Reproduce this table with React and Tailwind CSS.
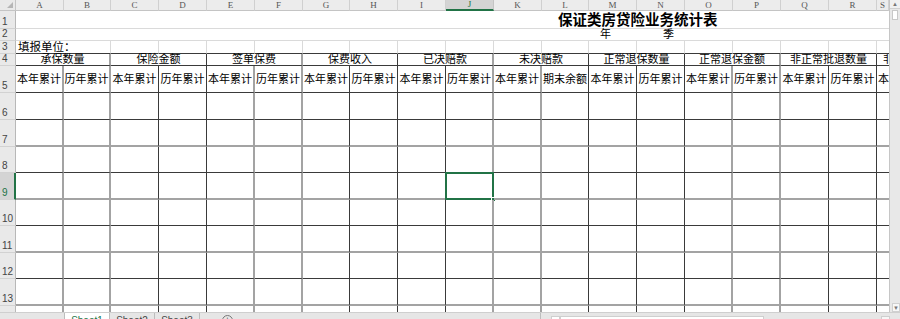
import React from "react";

const COLS = "ABCDEFGHIJKLMNOPQRS".split("");
// right-edge line of each column A..R as it shows in the shot: k = dark, g = soft grey
const VLINE = ["g", "g", "k", "k", "g", "g", "k", "k", "k", "g", "g", "k", "k", "k", "g", "g", "k", "k"];
const HLINE = { 4: "k", 5: "k", 6: "k", 7: "g", 8: "k", 9: "g", 10: "k", 11: "g", 12: "k", 13: "g" };
const RB = { k: "border-r border-r-[#3a3a3a]", g: "border-r-2 border-r-[#a3a3a3]" };
const BB = { k: "border-b border-b-[#3a3a3a]", g: "border-b-2 border-b-[#a3a3a3]" };

const GROUPS = [
  "承保数量",
  "保险金额",
  "签单保费",
  "保费收入",
  "已决赔款",
  "未决赔款",
  "正常退保数量",
  "正常退保金额",
  "非正常批退数量",
];

const SUB = Array.from({ length: 19 }, (_, i) => (i === 11 ? "期末余额" : i % 2 === 0 ? "本年累计" : "历年累计"));

function RowHead({ n, active }) {
  return (
    <div
      className={`flex items-end pl-[2px] pb-[1px] text-[10px] leading-none border-b border-b-[#d2d2d2] ${
        active
          ? "bg-[#d4d4d4] text-[#217346] border-r-2 border-r-[#217346]"
          : "bg-[#e9e9e9] text-[#444] border-r border-r-[#b8b8b8]"
      }`}
    >
      {n}
    </div>
  );
}

export default function App() {
  const dataRows = [6, 7, 8, 9, 10, 11, 12, 13, 14];

  return (
    <div className="w-[900px] h-[319px] overflow-hidden bg-white font-['Liberation_Sans','Noto_Sans_CJK_SC',sans-serif] text-black">
      <div className="flex h-[312px] overflow-hidden">
        <div className="grid w-[889px] grid-cols-[16px_48px_47px_48px_48px_48px_48px_47px_48px_48px_48px_48px_47px_48px_48px_48px_48px_48px_48px_12px] grid-rows-[11px_18px_12px_13px_12px_27px_27px_27px_26px_27px_26px_27px_26px_27px_27px]">
          {/* column headers */}
          <div className="relative bg-[#e9e9e9] border-r border-b border-[#c4c4c4]">
            <svg className="absolute right-[2px] bottom-[2px]" width="6" height="6" viewBox="0 0 6 6">
              <polygon points="6,0 6,6 0,6" fill="#b5b5b5" />
            </svg>
          </div>
          {COLS.map((c) => (
            <div
              key={c}
              className={`flex items-center justify-center overflow-hidden font-['Liberation_Serif',serif] text-[9px] leading-none ${
                c === "J"
                  ? "bg-[#d4d4d4] text-[#217346] border-r border-r-[#c4c4c4] border-b-2 border-b-[#217346]"
                  : "bg-[#ececec] text-[#555] border-r border-r-[#d0d0d0] border-b border-b-[#c4c4c4]"
              }`}
            >
              {c}
            </div>
          ))}

          {/* row 1 - title */}
          <RowHead n={1} />
          <div className="col-span-19 flex items-end pl-[542px] border-b border-b-[#dadada]">
            <span className="text-[14.5px] font-bold leading-[15px] whitespace-nowrap">保证类房贷险业务统计表</span>
          </div>

          {/* row 2 */}
          <RowHead n={2} />
          <div className="col-span-19 flex items-end pl-[584px] gap-[52px] border-b border-b-[#dadada] text-[11px] leading-[11px]">
            <span>年</span>
            <span>季</span>
          </div>

          {/* row 3 */}
          <RowHead n={3} />
          <div className="col-span-2 flex items-end pl-[2px] text-[11.5px] leading-[12px] whitespace-nowrap border-r border-r-[#dadada] border-b border-b-[#3a3a3a]">
            填报单位：
          </div>
          {COLS.slice(2).map((c, i) => (
            <div
              key={c}
              className={`border-b border-b-[#3a3a3a] ${i < 16 ? "border-r border-r-[#dadada]" : ""}`}
            />
          ))}

          {/* row 4 - groups */}
          <RowHead n={4} />
          {GROUPS.map((g, i) => (
            <div
              key={g}
              className={`col-span-2 flex items-end justify-center text-[11px] leading-[11px] whitespace-nowrap ${RB[VLINE[i * 2 + 1]]} ${BB.k}`}
            >
              {g}
            </div>
          ))}
          <div className={`flex items-end pl-[6px] text-[11px] leading-[11px] whitespace-nowrap overflow-x-hidden ${BB.k}`}>
            非正常批退金额
          </div>

          {/* row 5 - sub headers */}
          <RowHead n={5} />
          {SUB.map((s, i) => (
            <div
              key={i}
              className={`flex items-center ${i < 18 ? "justify-center" : "pl-[1px] overflow-x-hidden"} text-[11px] leading-[12px] whitespace-nowrap ${
                i < 18 ? RB[VLINE[i]] : ""
              } ${BB.k}`}
            >
              {s}
            </div>
          ))}

          {/* data rows */}
          {dataRows.map((r) => (
            <React.Fragment key={r}>
              <RowHead n={r} active={r === 9} />
              {COLS.map((c, i) => (
                <div
                  key={c}
                  className={`relative ${i < 18 ? RB[VLINE[i]] : ""} ${HLINE[r] ? BB[HLINE[r]] : ""}`}
                >
                  {r === 9 && c === "J" && (
                    <div className="absolute -left-px -top-px -right-[2px] -bottom-[2px] border-2 border-[#217346]">
                      <div className="absolute -right-[4px] -bottom-[4px] w-[5px] h-[5px] bg-[#217346] border border-white" />
                    </div>
                  )}
                </div>
              ))}
            </React.Fragment>
          ))}
        </div>

        {/* vertical scrollbar */}
        <div className="flex-1 flex flex-col bg-[#e8e8e8] border-l border-l-[#c6c6c6]">
          <div className="h-[9px] flex items-center justify-center bg-[#f0f0f0] border-b border-[#d0d0d0] text-[6px] leading-none text-[#777]">
            ▲
          </div>
          <div className="mx-[2px] mt-[1px] h-[10px] bg-white border border-[#c8c8c8]" />
          <div className="flex-1" />
          <div className="h-[9px] ml-[2px] flex items-center justify-center bg-[#f7f7f7] border border-[#d0d0d0] text-[6px] leading-none text-[#777]">
            ▼
          </div>
        </div>
      </div>

      {/* sheet tabs + horizontal scrollbar */}
      <div className="flex h-[20px] bg-[#e6e6e6] border-t border-t-[#cfcfcf] text-[10px] leading-none">
        <div className="w-[64px] shrink-0" />
        <div className="w-[46px] shrink-0 pt-[3px] text-center bg-white text-[#217346] border-x border-[#bdbdbd]">Sheet1</div>
        <div className="w-[45px] shrink-0 pt-[3px] text-center text-[#444] border-r border-[#bdbdbd]">Sheet2</div>
        <div className="w-[45px] shrink-0 pt-[3px] text-center text-[#444] border-r border-[#bdbdbd]">Sheet3</div>
        <div className="ml-[22px] mt-[2px] w-[11px] h-[11px] shrink-0 rounded-full border border-[#777] flex items-center justify-center text-[9px] text-[#555]">
          +
        </div>
        <div className="w-[307px] shrink-0" />
        <div className="w-[11px] shrink-0 border-l border-[#bdbdbd]" />
        <div className="w-[9px] shrink-0 mt-[3px] bg-white border border-[#cfcfcf]" />
        <div className="w-[204px] shrink-0 mt-[3px] bg-white border border-[#cfcfcf]" />
        <div className="flex-1" />
        <div className="w-[9px] shrink-0 mt-[3px] mr-[10px] bg-[#f7f7f7] border border-[#cfcfcf]" />
      </div>
    </div>
  );
}
